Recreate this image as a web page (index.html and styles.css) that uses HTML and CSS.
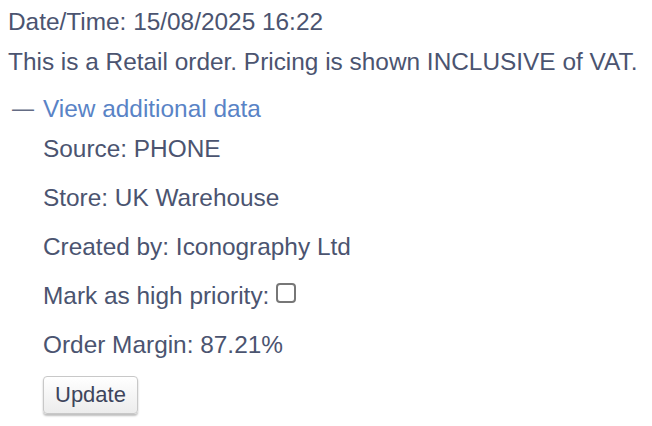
FILE: index.html
```html
<!DOCTYPE html>
<html>
<head>
<meta charset="utf-8">
<link rel="stylesheet" href="styles.css">
</head>
<body>
<div class="order-info">
  <p class="line">Date/Time: 15/08/2025 16:22</p>
  <p class="line">This is a Retail order. Pricing is shown INCLUSIVE of VAT.</p>
  <div class="extra">
    <div class="toggle"><span class="dash">—</span><a class="link" href="#">View additional data</a></div>
    <div class="details">
      <p class="item">Source: PHONE</p>
      <p class="item">Store: UK Warehouse</p>
      <p class="item">Created by: Iconography Ltd</p>
      <p class="item">Mark as high priority: <input type="checkbox" class="check"></p>
      <p class="item last">Order Margin: 87.21%</p>
      <button class="btn">Update</button>
    </div>
  </div>
</div>
</body>
</html>
```
FILE: styles.css
```css
html, body { background: #fff; }
body {
  margin: 0;
  padding: 6px 8px 5px;
  font-family: "Liberation Sans", Arial, sans-serif;
  font-size: 24.4px;
  color: #4b5470;
}
.line { margin: 0 0 8px; line-height: 32px; }
.extra { margin-top: 15px; }
.toggle { display: flex; align-items: center; line-height: 32px; }
.dash { color: #646c84; width: 35px; padding-left: 4px; box-sizing: border-box; font-size: 22px; }
.link { color: #5983c6; text-decoration: none; }
.details { padding-left: 35px; }
.item { margin: 8px 0 17px; line-height: 32px; }
.item.last { margin-bottom: 15px; }
.check {
  appearance: none;
  -webkit-appearance: none;
  width: 20px; height: 20px;
  border: 2px solid #777;
  border-radius: 4px;
  margin: 0;
  vertical-align: 1px;
  background: #fff;
}
.btn {
  font-family: inherit;
  font-size: 22px;
  color: #3e455c;
  padding: 5px 11px;
  border: 1px solid #c8c8c8;
  border-radius: 4px;
  background: linear-gradient(#ffffff, #ececec);
  box-shadow: 0 2px 2px rgba(0,0,0,0.25);
}
```
